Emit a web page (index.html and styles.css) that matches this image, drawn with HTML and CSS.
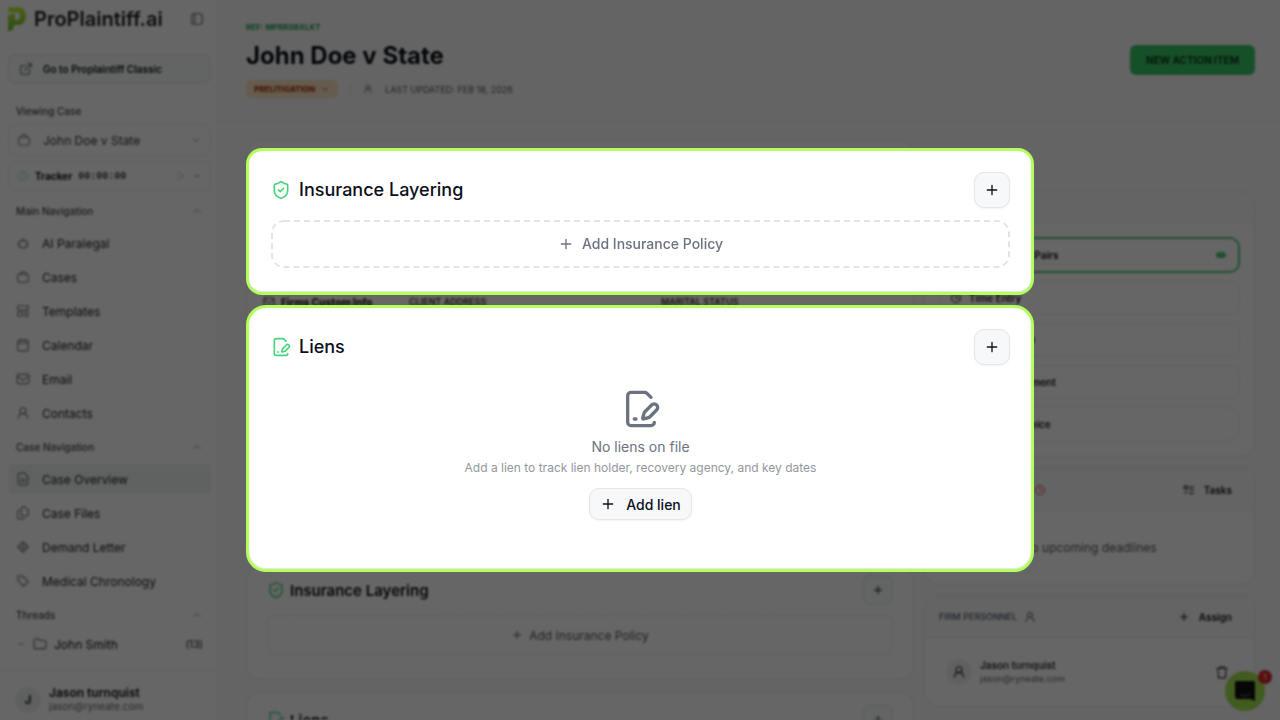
FILE: index.html
```html
<!DOCTYPE html>
<html lang="en">
<head>
<meta charset="utf-8">
<title>ProPlaintiff.ai – John Doe v State</title>
<link rel="stylesheet" href="styles.css">
</head>
<body>
<svg class="sprite" aria-hidden="true">
  <symbol id="plus" viewBox="0 0 24 24"><path d="M5 12h14M12 5v14"/></symbol>
  <symbol id="shield" viewBox="0 0 24 24"><path d="M20 13c0 5-3.500 7.500-7.660 8.950a1 1 0 0 1-.67-.01C7.500 20.500 4 18 4 13V6a1 1 0 0 1 1-1c2 0 4.500-1.200 6.240-2.720a1.170 1.170 0 0 1 1.520 0C14.510 3.810 17 5 19 5a1 1 0 0 1 1 1z"/><path d="m9 12 2 2 4-4"/></symbol>
  <symbol id="filepen" viewBox="0 0 24 24"><path d="m18 5-2.414-2.414A2 2 0 0 0 14.172 2H6a2 2 0 0 0-2 2v16a2 2 0 0 0 2 2h12a2 2 0 0 0 2-2"/><path d="M21.378 12.626a1 1 0 0 0-3.004-3.004l-4.010 4.012a2 2 0 0 0-.506.854l-.837 2.870a.5.5 0 0 0 .62.62l2.870-.837a2 2 0 0 0 .854-.506z"/><path d="M8 18h1"/></symbol>
  <symbol id="up" viewBox="0 0 24 24"><path d="m6 15 6-6 6 6"/></symbol>
  <symbol id="down" viewBox="0 0 24 24"><path d="m6 9 6 6 6-6"/></symbol>
  <symbol id="panel" viewBox="0 0 24 24"><rect x="3" y="3" width="18" height="18" rx="3"/><path d="M8 3v18"/></symbol>
  <symbol id="external" viewBox="0 0 24 24"><path d="M15 3h6v6M10 14 21 3M18 13v6a2 2 0 0 1-2 2H5a2 2 0 0 1-2-2V8a2 2 0 0 1 2-2h6"/></symbol>
  <symbol id="bag" viewBox="0 0 24 24"><path d="M8 7V5a2 2 0 0 1 2-2h4a2 2 0 0 1 2 2v2"/><rect x="3" y="7" width="18" height="14" rx="3"/></symbol>
  <symbol id="clock" viewBox="0 0 24 24"><circle cx="12" cy="12" r="9"/><path d="M12 7v5l4 2"/></symbol>
  <symbol id="play" viewBox="0 0 24 24"><path d="m6 3 14 9-14 9z"/></symbol>
  <symbol id="bot" viewBox="0 0 24 24"><path d="M12 4v4M3 14h2M19 14h2"/><rect x="5" y="8" width="14" height="12" rx="4"/></symbol>
  <symbol id="template" viewBox="0 0 24 24"><rect x="3" y="3" width="18" height="7" rx="1"/><rect x="3" y="14" width="8" height="7" rx="1"/><path d="M15 14h6M15 18h6M15 21h6"/></symbol>
  <symbol id="calendar" viewBox="0 0 24 24"><rect x="3" y="4" width="18" height="18" rx="2"/><path d="M3 9h18M8 2v4M16 2v4"/></symbol>
  <symbol id="mail" viewBox="0 0 24 24"><rect x="2" y="4" width="20" height="16" rx="2"/><path d="m2 7 10 7 10-7"/></symbol>
  <symbol id="user" viewBox="0 0 24 24"><circle cx="12" cy="8" r="5"/><path d="M4 21c0-5 3-8 8-8s8 3 8 8"/></symbol>
  <symbol id="file" viewBox="0 0 24 24"><path d="M15 2H6a2 2 0 0 0-2 2v16a2 2 0 0 0 2 2h12a2 2 0 0 0 2-2V7zM8 12h8M8 16h8"/></symbol>
  <symbol id="files" viewBox="0 0 24 24"><path d="M16 2h-5a2 2 0 0 0-2 2v11a2 2 0 0 0 2 2h8a2 2 0 0 0 2-2V7zM5 7a2 2 0 0 0-2 2v11a2 2 0 0 0 2 2h9"/></symbol>
  <symbol id="scale" viewBox="0 0 24 24"><path d="m12 3 9 9-9 9-9-9zM7 12h10M12 7v10"/></symbol>
  <symbol id="tag" viewBox="0 0 24 24"><path d="M3 3h8l10 10-8 8L3 11zM8 8h1"/></symbol>
  <symbol id="folder" viewBox="0 0 24 24"><path d="M3 20a2 2 0 0 1-1-2V5a2 2 0 0 1 2-2h5l3 3h8a2 2 0 0 1 2 2v10a2 2 0 0 1-2 2z"/></symbol>
  <symbol id="tasks" viewBox="0 0 24 24"><rect x="3" y="4" width="6" height="6"/><path d="m3 17 2 2 4-4M13 6h8M13 12h8M13 19h8"/></symbol>
  <symbol id="trash" viewBox="0 0 24 24"><path d="M3 6h18M8 6V3h8v3M5 6l1 16h12l1-16"/></symbol>
</svg>

<div class="app">
  <aside class="sidebar">
    <div class="brand">
      <svg class="brand-mark" viewBox="0 0 18 24"><defs><linearGradient id="leaf" x1="0" y1="0" x2="0" y2="1"><stop offset="0" stop-color="#c4f23c"/><stop offset="1" stop-color="#6fbf2a"/></linearGradient></defs><path fill="url(#leaf)" d="M0 0h11c4 0 7 4 7 9s-3 9-7 9H6c0 4-2 6-6 6V8l7-2v7c3 0 5-1 5-4s-2-4-5-4H0z"/></svg>
      <span class="brand-name">ProPlaintiff.ai</span>
      <button class="plain" aria-label="Collapse sidebar"><svg class="icon i14"><use href="#panel"/></svg></button>
    </div>
    <button class="classic"><svg class="icon i14"><use href="#external"/></svg>Go to Proplaintiff Classic</button>
    <div class="viewing">Viewing Case</div>
    <button class="case-select"><svg class="icon i14"><use href="#bag"/></svg><span class="grow">John Doe v State</span><svg class="icon i12"><use href="#down"/></svg></button>
    <div class="tracker"><svg class="icon i12 green"><use href="#clock"/></svg><b>Tracker</b><span class="grow mono">00:00:00</span><svg class="icon i10 green"><use href="#play"/></svg><svg class="icon i10"><use href="#down"/></svg></div>
    <nav class="nav">
      <div class="nav-label">Main Navigation<svg class="icon i12"><use href="#up"/></svg></div>
      <a class="nav-item" href="#"><svg class="icon i14"><use href="#bot"/></svg>AI Paralegal</a>
      <a class="nav-item" href="#"><svg class="icon i14"><use href="#bag"/></svg>Cases</a>
      <a class="nav-item" href="#"><svg class="icon i14"><use href="#template"/></svg>Templates</a>
      <a class="nav-item" href="#"><svg class="icon i14"><use href="#calendar"/></svg>Calendar</a>
      <a class="nav-item" href="#"><svg class="icon i14"><use href="#mail"/></svg>Email</a>
      <a class="nav-item" href="#"><svg class="icon i14"><use href="#user"/></svg>Contacts</a>
      <div class="nav-label">Case Navigation<svg class="icon i12"><use href="#up"/></svg></div>
      <a class="nav-item active" href="#"><svg class="icon i14"><use href="#file"/></svg>Case Overview</a>
      <a class="nav-item" href="#"><svg class="icon i14"><use href="#files"/></svg>Case Files</a>
      <a class="nav-item" href="#"><svg class="icon i14"><use href="#scale"/></svg>Demand Letter</a>
      <a class="nav-item" href="#"><svg class="icon i14"><use href="#tag"/></svg>Medical Chronology</a>
      <div class="nav-label">Threads<svg class="icon i12"><use href="#up"/></svg></div>
      <a class="thread" href="#"><svg class="icon i10"><use href="#down"/></svg><svg class="icon i14"><use href="#folder"/></svg><span class="grow">John Smith</span><span class="count">(13)</span></a>
    </nav>
    <div class="account"><span class="avatar">J</span><div><div class="person">Jason turnquist</div><div class="mail">jason@ryneate.com</div></div></div>
  </aside>

  <main class="main">
    <header class="head">
      <div class="head-text">
        <div class="ref">REF: MPRRSBXLKT</div>
        <h1 class="case-title">John Doe v State</h1>
        <div class="meta"><span class="stage">PRELITIGATION<svg class="icon i10"><use href="#down"/></svg></span><span class="rule"></span><svg class="icon i10"><use href="#user"/></svg><span>LAST UPDATED: FEB 18, 2026</span></div>
      </div>
      <button class="action">NEW ACTION ITEM</button>
    </header>
    <div class="columns">
      <div class="col">
        <section class="panel details">
          <div class="details-row"><svg class="icon i12"><use href="#mail"/></svg><b class="d-one">Firms Custom Info</b><span class="d-two">CLIENT ADDRESS</span><span>MARITAL STATUS</span></div>
        </section>
        <section class="panel layering">
          <div class="small-head"><svg class="icon i18 green"><use href="#shield"/></svg><h2>Insurance Layering</h2><button class="small-add" aria-label="Add policy"><svg class="icon i12"><use href="#plus"/></svg></button></div>
          <button class="small-dashed"><svg class="icon i12"><use href="#plus"/></svg>Add Insurance Policy</button>
        </section>
        <section class="panel layering last">
          <div class="small-head"><svg class="icon i18 green"><use href="#filepen"/></svg><h2>Liens</h2><button class="small-add" aria-label="Add lien"><svg class="icon i12"><use href="#plus"/></svg></button></div>
        </section>
      </div>
      <div class="col side">
        <section class="panel quick">
          <div class="quick-head">QUICK ACTIONS</div>
          <div class="quick-list">
            <button class="quick-btn main-btn"><svg class="icon i12"><use href="#file"/></svg><span class="grow">Review Case Pairs</span><span class="pill"></span></button>
            <button class="quick-btn"><svg class="icon i12"><use href="#clock"/></svg>Time Entry</button>
            <button class="quick-btn"><svg class="icon i12"><use href="#mail"/></svg>Contact Entry</button>
            <button class="quick-btn"><svg class="icon i12"><use href="#file"/></svg>Upload Document</button>
            <button class="quick-btn"><svg class="icon i12"><use href="#files"/></svg>Generate Invoice</button>
          </div>
        </section>
        <section class="panel">
          <div class="panel-head">UPCOMING EVENTS<svg class="icon i12 red"><use href="#clock"/></svg><button class="link-btn"><svg class="icon i12"><use href="#tasks"/></svg>Tasks</button></div>
          <div class="none">No upcoming deadlines</div>
        </section>
        <section class="panel">
          <div class="panel-head short">FIRM PERSONNEL<svg class="icon i12"><use href="#user"/></svg><button class="link-btn"><svg class="icon i12"><use href="#plus"/></svg>Assign</button></div>
          <div class="member"><span class="avatar"><svg class="icon i14"><use href="#user"/></svg></span><div class="grow"><div class="person tiny">Jason turnquist</div><div class="mail tiny-mail">jason@ryneate.com</div></div><svg class="icon i14"><use href="#trash"/></svg></div>
        </section>
      </div>
    </div>
  </main>
  <button class="chat" aria-label="Chat"><svg viewBox="0 0 24 24"><path d="M4 2h16a2 2 0 0 1 2 2v18l-5-2H4a2 2 0 0 1-2-2V4a2 2 0 0 1 2-2z" fill="#111"/><path d="M7 15q5 4 10 0" fill="none" stroke="#777" stroke-width="1"/></svg><span class="chat-badge">1</span></button>
</div>

<div class="overlay">
  <section class="card">
    <div class="card-head"><svg class="icon i20 green"><use href="#shield"/></svg><h2 class="card-title">Insurance Layering</h2><button class="add" aria-label="Add insurance policy"><svg class="icon i16"><use href="#plus"/></svg></button></div>
    <button class="dashed"><svg class="dash-frame" aria-hidden="true"><rect class="dash-rect" rx="12"/></svg><svg class="icon i16"><use href="#plus"/></svg>Add Insurance Policy</button>
  </section>
  <section class="card round">
    <div class="card-head"><svg class="icon i20 green"><use href="#filepen"/></svg><h2 class="card-title">Liens</h2><button class="add" aria-label="New lien"><svg class="icon i16"><use href="#plus"/></svg></button></div>
    <div class="empty">
      <svg class="icon i40"><use href="#filepen"/></svg>
      <p class="empty-title">No liens on file</p>
      <p class="empty-note">Add a lien to track lien holder, recovery agency, and key dates</p>
      <button class="add-lien"><svg class="icon i16"><use href="#plus"/></svg>Add lien</button>
    </div>
  </section>
</div>
</body>
</html>
```

FILE: styles.css
```css
* { box-sizing: border-box; }
body { margin: 0; background: #fff; font-family: Inter, "Liberation Sans", sans-serif; color: #0b0f19; }
button { font: inherit; color: inherit; margin: 0; }
a { color: inherit; text-decoration: none; }
h1, h2, p { margin: 0; }
.sprite { position: absolute; width: 0; height: 0; }
.icon { flex: none; fill: none; stroke: currentColor; stroke-width: 2; stroke-linecap: round; stroke-linejoin: round; }
.i10 { width: 10px; height: 10px; }
.i12 { width: 12px; height: 12px; }
.i14 { width: 14px; height: 14px; }
.i16 { width: 16px; height: 16px; }
.i18 { width: 18px; height: 18px; }
.i20 { width: 20px; height: 20px; }
.i40 { width: 40px; height: 40px; }
.green { color: #4ad27c; }
.red { color: #e5484d; }
.grow { flex: 1; text-align: left; }

/* Application behind the spotlight */
.app { display: flex; height: 100vh; overflow: hidden; background: #fff; filter: blur(1px); }
.sidebar { flex: none; width: 218px; display: flex; flex-direction: column; padding: 0 6px 0 8px; border-right: 1px solid #f1f2f4; font-size: 12px; }
.sidebar .icon { opacity: .6; }
.brand { display: flex; align-items: center; height: 38px; gap: 8px; }
.brand-mark { width: 18px; height: 24px; flex: none; }
.brand-name { flex: 1; font-size: 20px; font-weight: 600; line-height: 24px; white-space: nowrap; color: #222; }
.plain { padding: 0; border: 0; background: none; display: flex; margin-right: 7px; }
.classic { display: flex; align-items: center; gap: 10px; height: 30px; margin-top: 16px; padding: 0 10px; border: 1px solid #e6e8eb; border-radius: 8px; background: #f8f9fb; font-size: 10px; font-weight: 600; }
.viewing { margin: 19px 8px 5px; font-size: 10px; line-height: 16px; font-weight: 500; color: #444; }
.case-select { display: flex; align-items: center; gap: 12px; height: 32px; padding: 0 8px; border: 1px solid #eceef0; border-radius: 8px; background: #fff; font-size: 12px; color: #333; }
.tracker { display: flex; align-items: center; gap: 6px; height: 30px; margin-top: 5px; padding: 0 8px; border: 1px solid #eceef0; border-radius: 8px; font-size: 10px; }
.mono { font-family: "Liberation Mono", monospace; font-weight: 700; color: #445; }
.nav { flex: 1; min-height: 0; margin-top: 4px; overflow: hidden; }
.nav-label { display: flex; justify-content: space-between; align-items: center; height: 30px; margin-top: 1px; padding: 0 8px; font-size: 10px; font-weight: 500; color: #444; }
.nav-item { display: flex; align-items: center; gap: 12px; height: 30px; margin: 2px 0 4px; padding: 0 8px; border-radius: 4px; font-size: 12px; color: #222; }
.active { background: #eef5f1; }
.thread { display: flex; align-items: center; gap: 7px; height: 28px; padding: 0 8px; font-size: 12px; }
.count { font-size: 10px; }
.account { display: flex; align-items: center; gap: 8px; height: 50px; margin: 0 -6px 0 -8px; padding: 8px 15px 0; border-top: 1px solid #eceef0; }
.avatar { display: flex; align-items: center; justify-content: center; width: 26px; height: 26px; border-radius: 50%; background: #eef2f0; font-weight: 600; }
.person { font-size: 12px; line-height: 14px; font-weight: 600; }
.mail { font-size: 10px; line-height: 13px; color: #667; }

.main { flex: 1; min-width: 0; background: #f9fafb; display: flex; flex-direction: column; }
.head { flex: none; display: flex; justify-content: space-between; align-items: center; height: 122px; padding: 0 25px 2px 28px; border-bottom: 1px solid #eceef0; }
.ref { font-size: 8px; line-height: 12px; font-weight: 700; color: #22a050; }
.case-title { margin-top: 7px; font-size: 24px; line-height: 32px; font-weight: 700; }
.meta { display: flex; align-items: center; gap: 12px; margin-top: 8px; font-size: 9px; color: #4b5563; }
.stage { display: flex; align-items: center; gap: 5px; height: 18px; padding: 0 8px; border-radius: 5px; background: #fce3c5; color: #b03408; font-size: 8px; font-weight: 800; }
.rule { width: 1px; height: 12px; background: #e1e3e6; }
.action { height: 30px; padding: 0 16px; border: 0; border-radius: 6px; background: #39c866; color: #0d361c; font-size: 10px; font-weight: 700; }
.columns { flex: 1; min-height: 0; display: flex; gap: 10px; padding: 18px 25px 0 28px; }
.col { flex: 1; min-width: 0; display: flex; flex-direction: column; gap: 11px; }
.side { flex: 0 0 331px; gap: 10px; padding-top: 51px; }
.panel { flex: none; border: 1px solid #e8eaed; border-radius: 14px; background: #fff; }
.details { height: 415px; display: flex; align-items: flex-start; padding: 153px 16px 0; }
.details-row { display: flex; align-items: center; gap: 6px; font-size: 9px; line-height: 16px; color: #333; font-weight: 600; }
.d-one { width: 122px; font-size: 10px; }
.d-two { width: 246px; }
.layering { padding: 7px 20px 24px; }
.last { padding-top: 12px; }
.small-head { display: flex; align-items: center; gap: 5px; height: 32px; }
.small-head h2 { flex: 1; font-size: 15px; font-weight: 600; }
.small-add { display: flex; align-items: center; justify-content: center; width: 30px; height: 30px; border: 1px solid #e1e4e8; border-radius: 7px; background: #f8f9fb; }
.small-dashed { display: flex; align-items: center; justify-content: center; gap: 6px; width: 100%; height: 40px; margin-top: 9px; border: 1px dashed #dcdfe3; border-radius: 8px; background: none; font-size: 12px; color: #4b5563; }
.quick-head { height: 32px; padding: 9px 16px; border-bottom: 1px solid #eceef0; font-size: 10px; background: #f9fafb; border-radius: 14px 14px 0 0; }
.quick-list { display: flex; flex-direction: column; gap: 8px; padding: 13px 14px 15px; }
.quick-btn { display: flex; align-items: center; gap: 7px; height: 34px; padding: 0 12px 0 10px; border: 1px solid #f0f1f3; border-radius: 10px; background: #fff; font-size: 10px; font-weight: 600; }
.main-btn { height: 36px; border: 2px solid #54c779; }
.pill { width: 10px; height: 6px; border-radius: 3px; background: #54c779; }
.panel-head { display: flex; align-items: center; gap: 7px; height: 44px; padding: 0 22px 0 14px; border-bottom: 1px solid #eceef0; background: #f9fafb; border-radius: 14px 14px 0 0; font-size: 9px; font-weight: 500; color: #4b5563; }
.short { height: 42px; }
.link-btn { display: flex; align-items: center; gap: 9px; margin-left: auto; padding: 0; border: 0; background: none; color: #111; font-size: 10px; font-weight: 600; }
.none { height: 72px; line-height: 72px; text-align: center; font-size: 12px; color: #4b5563; }
.member { display: flex; align-items: center; gap: 8px; height: 68px; padding: 0 25px 0 21px; color: #333; }
.tiny { font-size: 10px; line-height: 13px; }
.tiny-mail { font-size: 9px; }
.chat { position: absolute; right: 15px; bottom: 9px; width: 40px; height: 40px; padding: 8px; border: 0; border-radius: 50%; background: #a5e34f; }
.chat svg { display: block; width: 24px; height: 24px; }
.chat-badge { position: absolute; top: -1px; right: -7px; width: 14px; height: 14px; border-radius: 50%; background: #dc2626; color: #fff; font-size: 8px; line-height: 14px; }

/* Spotlight cards */
.overlay { position: fixed; inset: 0; display: flex; flex-direction: column; justify-content: center; align-items: center; gap: 10px; background: rgba(0, 0, 0, .6); }
.card { width: 100%; max-width: 788px; padding: 21px 21px 24px 22px; border: 3px solid #b3ff5c; border-radius: 16px; background: #fff; box-shadow: inset 0 -1px 0 #e6e6ee; }
.round { border-radius: 20px; }
.card-head { display: flex; align-items: center; gap: 8px; }
.card-title { flex: 1; font-size: 18px; line-height: 28px; font-weight: 500; }
.add { display: flex; align-items: center; justify-content: center; width: 36px; height: 36px; padding: 0; border: 1px solid #e4e6e9; border-radius: 10px; background: #f7f8fa; color: #111; box-shadow: 0 1px 2px rgba(0, 0, 0, .05); }
.dashed { position: relative; display: flex; align-items: center; justify-content: center; gap: 8px; width: 100%; height: 48px; margin-top: 12px; padding: 0 0 1px; border: 0; background: none; font-size: 14px; font-weight: 500; color: #6b7280; }
.dash-frame { position: absolute; inset: 0; width: 100%; height: 100%; }
.dash-rect { x: 1px; y: 1px; width: calc(100% - 2px); height: calc(100% - 2px); fill: none; stroke: #e4e4e6; stroke-width: 2; stroke-dasharray: 6 4; }
.empty { display: flex; flex-direction: column; align-items: center; padding: 24px 0 25px; color: #6b7280; }
.empty-title { margin-top: 8px; font-size: 14px; line-height: 20px; }
.empty-note { margin-top: 3px; font-size: 12px; line-height: 16px; color: #9297a0; }
.add-lien { display: flex; align-items: center; gap: 10px; height: 32px; margin-top: 12px; padding: 0 10px; border: 1px solid #e4e6e9; border-radius: 10px; background: #f7f8fa; color: #0b0f19; font-size: 14px; font-weight: 500; box-shadow: 0 1px 2px rgba(0, 0, 0, .05); }
```
